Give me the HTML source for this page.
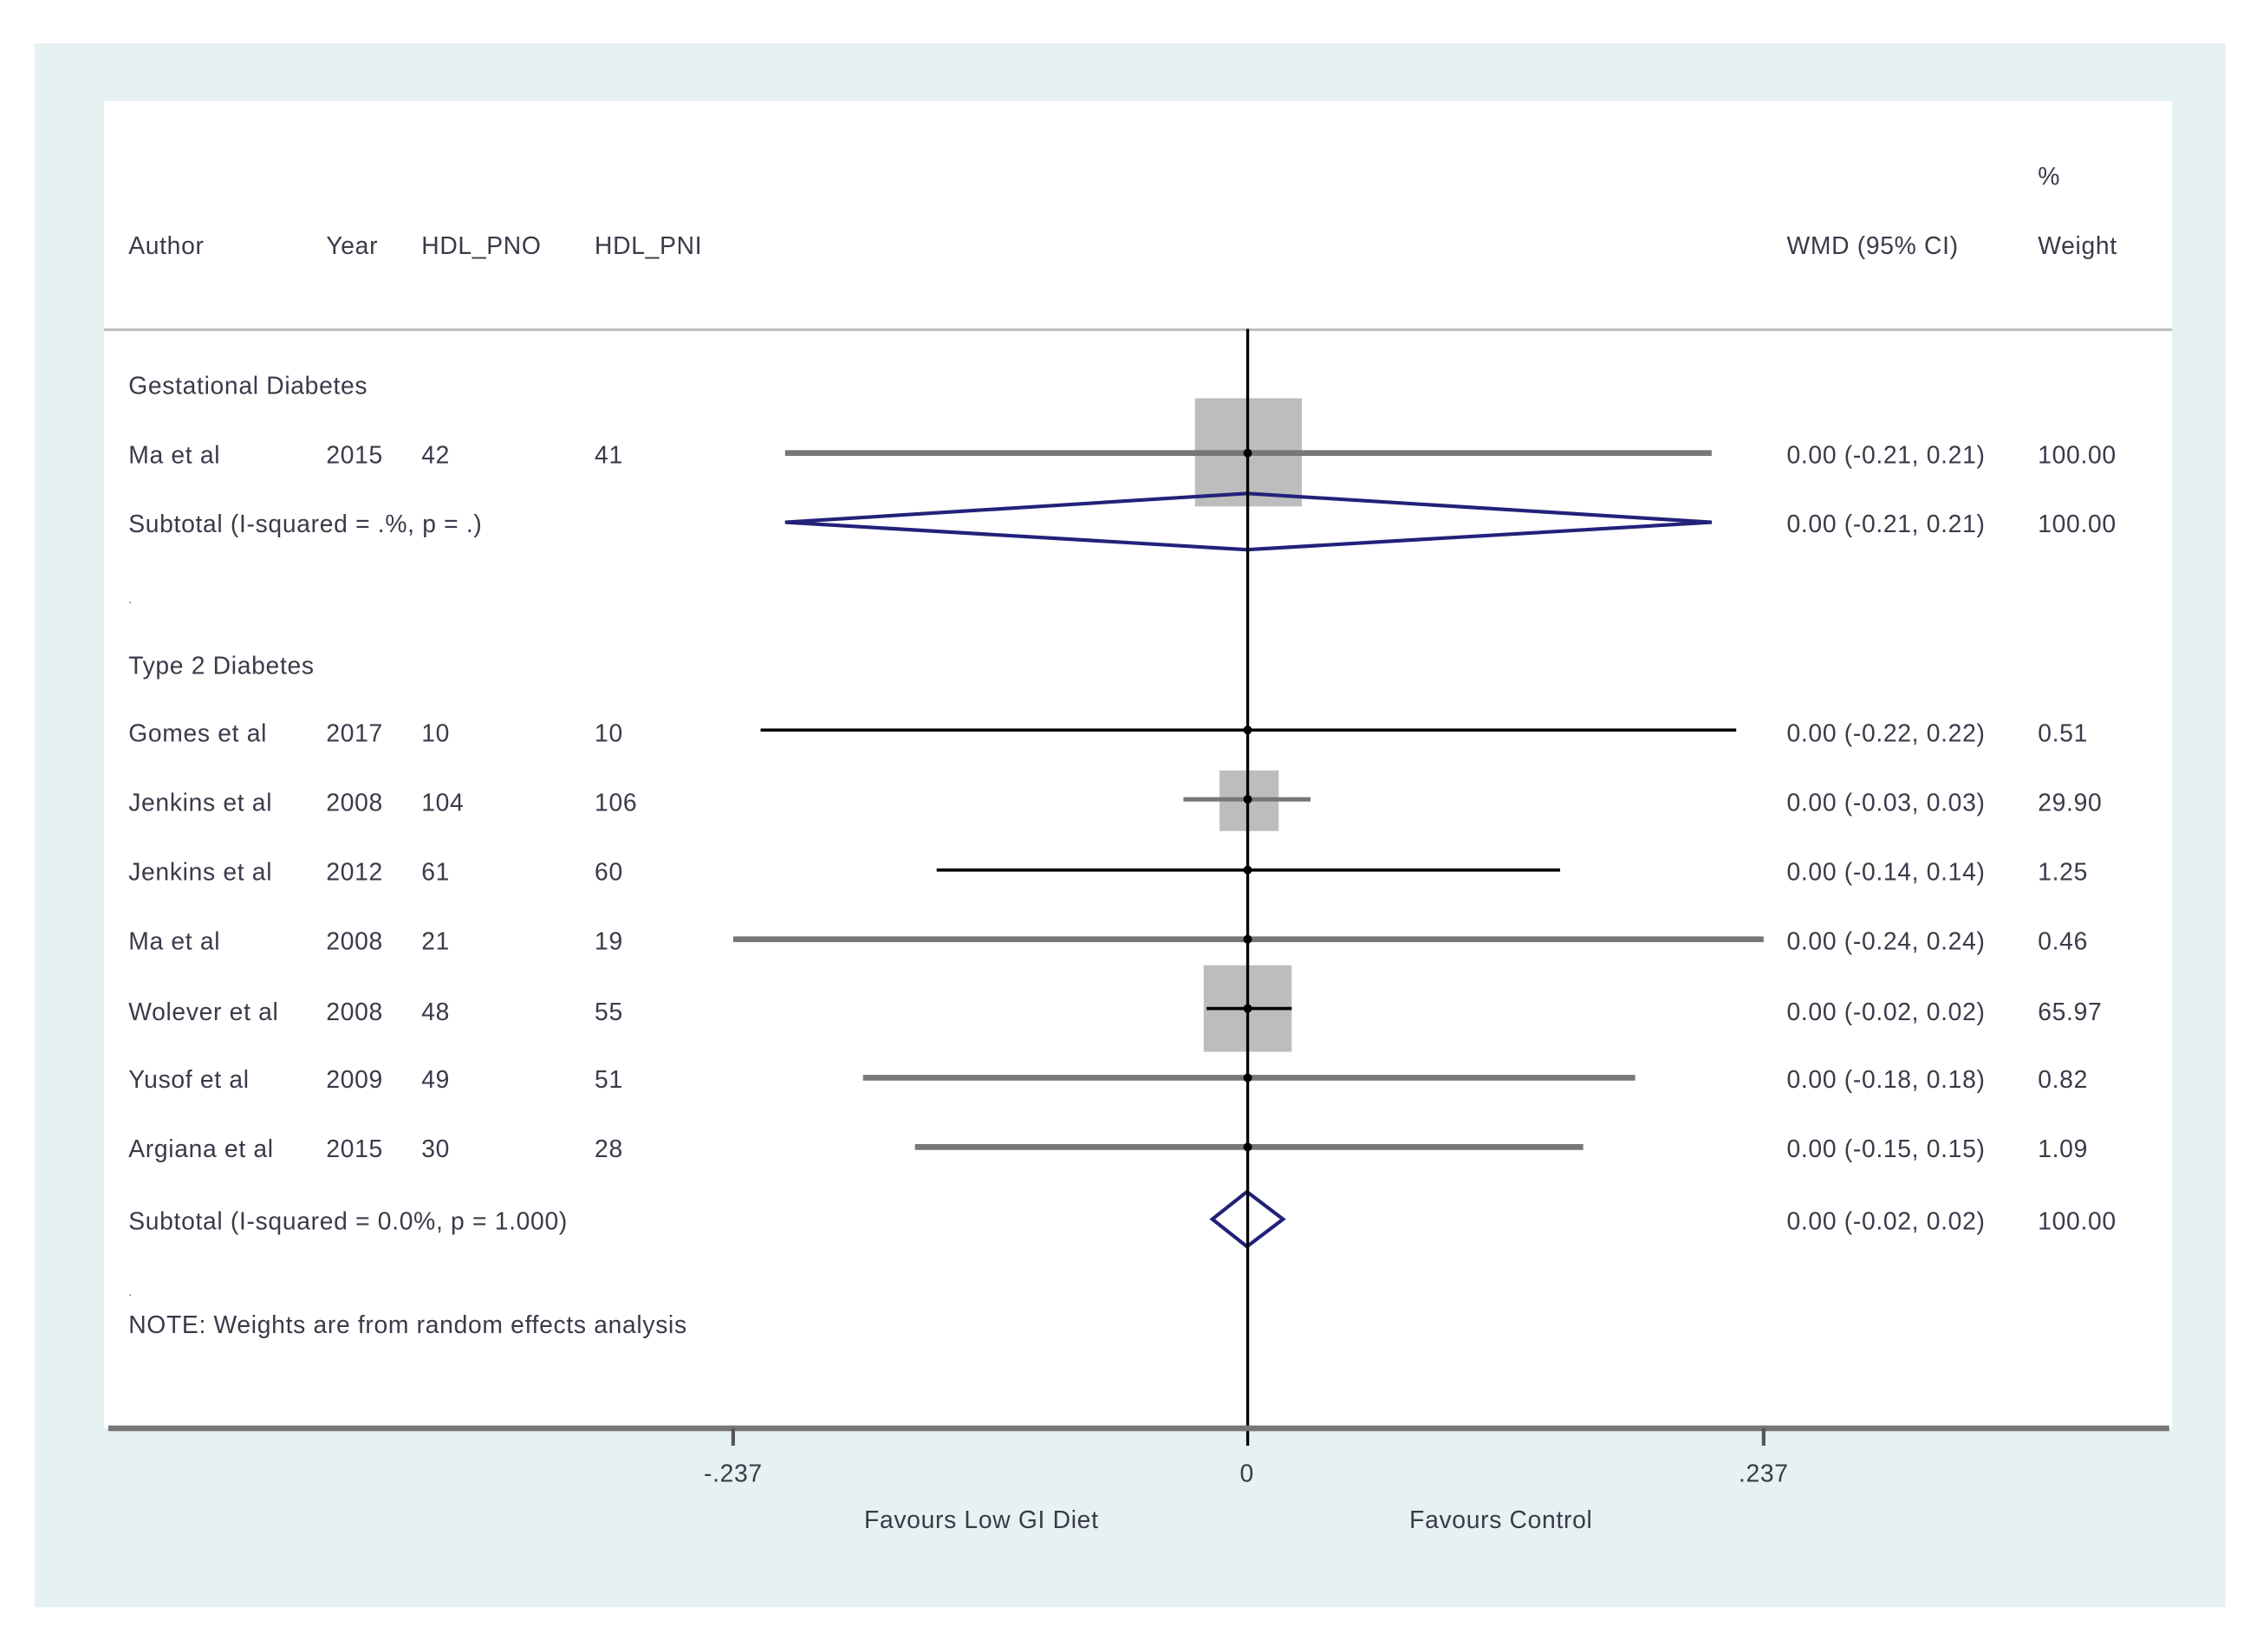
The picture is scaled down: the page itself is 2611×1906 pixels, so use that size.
<!DOCTYPE html>
<html><head><meta charset="utf-8"><style>
html,body{margin:0;padding:0;background:#fff;width:2611px;height:1906px;overflow:hidden}
svg{display:block}
text{font-family:"Liberation Sans",sans-serif;font-size:17px;fill:#3a3a4a;letter-spacing:0.4px}
</style></head><body>
<svg width="2611" height="1906" viewBox="0 0 1568 1145" preserveAspectRatio="none">
<rect x="0" y="0" width="1568" height="1145" fill="#fff"/>
<rect x="24" y="30" width="1518" height="1084" fill="#e6f1f2"/>
<rect x="72" y="70" width="1433" height="920" fill="#fff"/>
<line x1="72" y1="228.5" x2="1505" y2="228.5" stroke="#c0c0c0" stroke-width="2"/>
<text x="1412" y="128">%</text>
<text x="89" y="176">Author</text><text x="226" y="176">Year</text><text x="292" y="176">HDL_PNO</text><text x="412" y="176">HDL_PNI</text>
<text x="1238" y="176">WMD (95% CI)</text><text x="1412" y="176">Weight</text>
<rect x="828" y="276" width="74" height="75" fill="#bdbdbd"/>
<line x1="544" y1="314" x2="1186" y2="314" stroke="#777" stroke-width="4"/>
<polygon points="544,362 864,342 1186,362 864,381" fill="none" stroke="#22227a" stroke-width="2.5"/>
<line x1="527" y1="506" x2="1203" y2="506" stroke="#000" stroke-width="2.2"/>
<rect x="845" y="534" width="41" height="42" fill="#bdbdbd"/>
<line x1="820" y1="554" x2="908" y2="554" stroke="#777" stroke-width="3"/>
<line x1="649" y1="603" x2="1081" y2="603" stroke="#000" stroke-width="2.2"/>
<line x1="508" y1="651" x2="1222" y2="651" stroke="#777" stroke-width="4"/>
<rect x="834" y="669" width="61" height="60" fill="#bdbdbd"/>
<line x1="836" y1="699" x2="895" y2="699" stroke="#000" stroke-width="2.2"/>
<line x1="598" y1="747" x2="1133" y2="747" stroke="#777" stroke-width="4"/>
<line x1="634" y1="795" x2="1097" y2="795" stroke="#777" stroke-width="4"/>
<polygon points="840,845 864,826 889,845 864,864" fill="#fff" stroke="#22227a" stroke-width="2.5"/>
<line x1="864.5" y1="228" x2="864.5" y2="1002" stroke="#000" stroke-width="2"/>
<g fill="#000"><circle cx="864.5" cy="314" r="3"/><circle cx="864.5" cy="506" r="3"/><circle cx="864.5" cy="554" r="3"/><circle cx="864.5" cy="603" r="3"/><circle cx="864.5" cy="651" r="3"/><circle cx="864.5" cy="699" r="3"/><circle cx="864.5" cy="747" r="3"/><circle cx="864.5" cy="795" r="3"/></g>
<line x1="75" y1="990" x2="1503" y2="990" stroke="#777" stroke-width="4"/>
<line x1="508" y1="990" x2="508" y2="1002" stroke="#555" stroke-width="2.5"/>
<line x1="1222" y1="990" x2="1222" y2="1002" stroke="#555" stroke-width="2.5"/>
<text x="508" y="1027" text-anchor="middle">-.237</text>
<text x="864" y="1027" text-anchor="middle">0</text>
<text x="1222" y="1027" text-anchor="middle">.237</text>
<text x="680" y="1059" text-anchor="middle">Favours Low GI Diet</text>
<text x="1040" y="1059" text-anchor="middle">Favours Control</text>
<text x="89" y="273">Gestational Diabetes</text>
<text x="89" y="321">Ma et al</text><text x="226" y="321">2015</text><text x="292" y="321">42</text><text x="412" y="321">41</text><text x="1238" y="321">0.00 (-0.21, 0.21)</text><text x="1412" y="321">100.00</text>
<text x="89" y="369">Subtotal  (I-squared = .%, p = .)</text><text x="1238" y="369">0.00 (-0.21, 0.21)</text><text x="1412" y="369">100.00</text>
<text x="89" y="418" style="font-size:8px">.</text>
<text x="89" y="467">Type 2 Diabetes</text>
<text x="89" y="514">Gomes et al</text><text x="226" y="514">2017</text><text x="292" y="514">10</text><text x="412" y="514">10</text><text x="1238" y="514">0.00 (-0.22, 0.22)</text><text x="1412" y="514">0.51</text>
<text x="89" y="562">Jenkins et al</text><text x="226" y="562">2008</text><text x="292" y="562">104</text><text x="412" y="562">106</text><text x="1238" y="562">0.00 (-0.03, 0.03)</text><text x="1412" y="562">29.90</text>
<text x="89" y="610">Jenkins et al</text><text x="226" y="610">2012</text><text x="292" y="610">61</text><text x="412" y="610">60</text><text x="1238" y="610">0.00 (-0.14, 0.14)</text><text x="1412" y="610">1.25</text>
<text x="89" y="658">Ma et al</text><text x="226" y="658">2008</text><text x="292" y="658">21</text><text x="412" y="658">19</text><text x="1238" y="658">0.00 (-0.24, 0.24)</text><text x="1412" y="658">0.46</text>
<text x="89" y="707">Wolever et al</text><text x="226" y="707">2008</text><text x="292" y="707">48</text><text x="412" y="707">55</text><text x="1238" y="707">0.00 (-0.02, 0.02)</text><text x="1412" y="707">65.97</text>
<text x="89" y="754">Yusof et al</text><text x="226" y="754">2009</text><text x="292" y="754">49</text><text x="412" y="754">51</text><text x="1238" y="754">0.00 (-0.18, 0.18)</text><text x="1412" y="754">0.82</text>
<text x="89" y="802">Argiana et al</text><text x="226" y="802">2015</text><text x="292" y="802">30</text><text x="412" y="802">28</text><text x="1238" y="802">0.00 (-0.15, 0.15)</text><text x="1412" y="802">1.09</text>
<text x="89" y="852">Subtotal  (I-squared = 0.0%, p = 1.000)</text><text x="1238" y="852">0.00 (-0.02, 0.02)</text><text x="1412" y="852">100.00</text>
<text x="89" y="898" style="font-size:8px">.</text>
<text x="89" y="924">NOTE: Weights are from random effects analysis</text>
</svg>
</body></html>
